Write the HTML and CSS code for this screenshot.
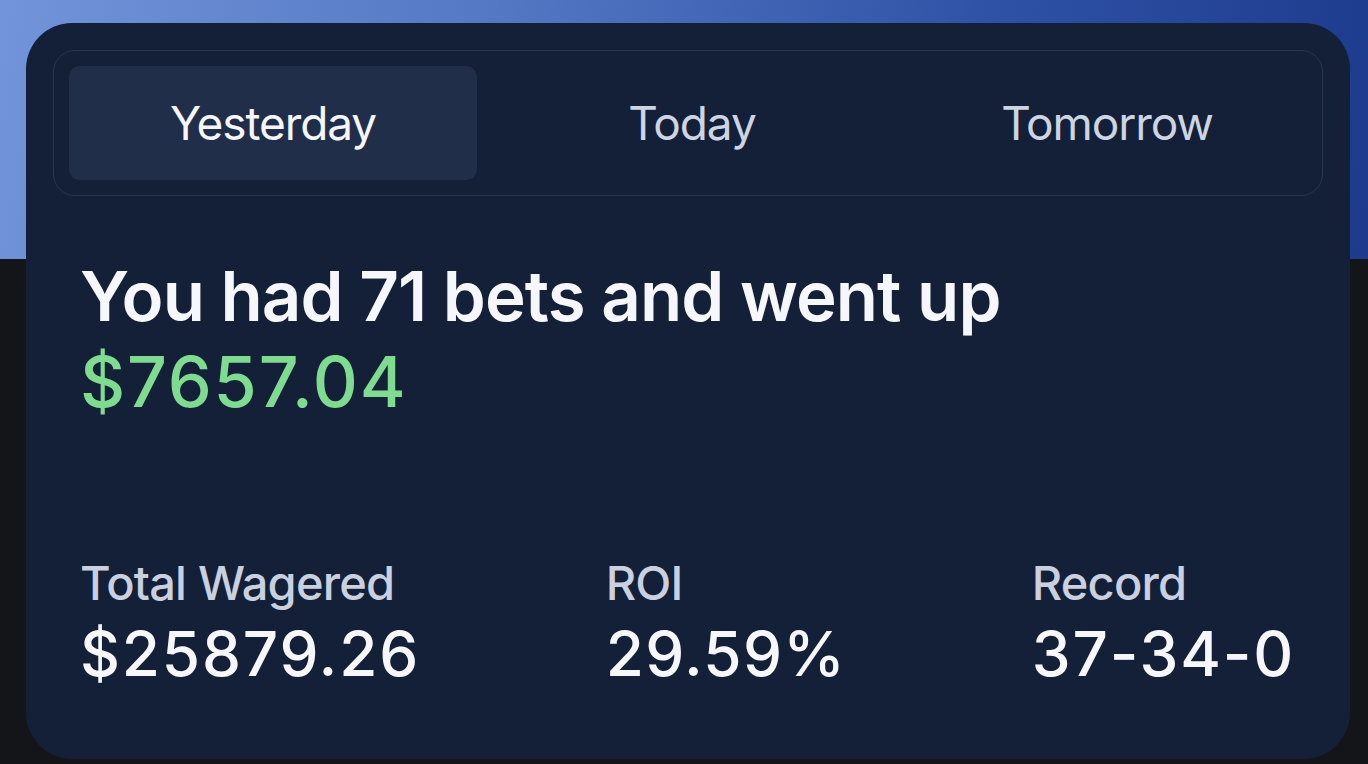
FILE: index.html
```html
<!DOCTYPE html>
<html lang="en">
<head>
<meta charset="utf-8">
<title>Betting summary</title>
<link rel="stylesheet" href="styles.css">
</head>
<body>
<main class="card">
  <nav class="tabs">
    <button class="tab tab-active">Yesterday</button>
    <button class="tab">Today</button>
    <button class="tab">Tomorrow</button>
  </nav>
  <section class="summary">
    <h1 class="headline">You had 71 bets and went up</h1>
    <div class="profit">$7657.04</div>
  </section>
  <section class="stats">
    <div class="stat">
      <div class="stat-label">Total Wagered</div>
      <div class="stat-value">$25879.26</div>
    </div>
    <div class="stat">
      <div class="stat-label">ROI</div>
      <div class="stat-value stat-value-pct">29.59%</div>
    </div>
    <div class="stat">
      <div class="stat-label">Record</div>
      <div class="stat-value">37-34-0</div>
    </div>
  </section>
</main>
</body>
</html>
```
FILE: styles.css
```css
html, body {
  margin: 0;
  padding: 0;
}
body {
  width: 1368px;
  height: 764px;
  overflow: hidden;
  font-family: Inter, "Noto Sans", "Liberation Sans", sans-serif;
  background:
    linear-gradient(100deg, #7294da 0%, #5478c4 35%, #2f52a6 70%, #1d3a8c 100%) top left / 100% 259px no-repeat,
    #131519;
  padding-top: 23px;
  box-sizing: border-box;
}
.card {
  margin-left: 26px;
  width: 1324px;
  height: 736px;
  box-sizing: border-box;
  background: #141f38;
  border-radius: 46px;
  padding: 27px 27px 0 27px;
}
.tabs {
  display: grid;
  grid-template-columns: repeat(3, 1fr);
  gap: 7px;
  border: 1px solid #293652;
  border-radius: 22px;
  padding: 15px 15px 14px 15px;
  height: 146px;
  box-sizing: border-box;
}
.tab {
  border: 0;
  background: transparent;
  font-family: inherit;
  font-size: 46px;
  font-weight: 400;
  color: #cdd4e2;
  border-radius: 11px;
  height: 114px;
  padding: 0;
  letter-spacing: -1.1px;
}
.tab + .tab {
  padding-left: 8px;
}
.tab-active {
  background: #212e4a;
  color: #f4f6fa;
}
.summary {
  padding: 57px 29px 0 27px;
}
.headline {
  margin: 0;
  font-size: 69px;
  line-height: 86px;
  font-weight: 600;
  color: #f6f7fa;
  letter-spacing: -0.9px;
}
.profit {
  font-size: 70px;
  line-height: 86px;
  font-weight: 500;
  color: #7fdb8f;
  letter-spacing: 1.8px;
}
.stats {
  display: flex;
  justify-content: space-between;
  padding: 130px 30px 0 27px;
}
.stat {
  display: flex;
  flex-direction: column;
  gap: 5px;
}
.stat-label {
  font-size: 47px;
  line-height: 56px;
  font-weight: 500;
  color: #c9d0df;
  letter-spacing: -0.8px;
}
.stat-value {
  font-size: 62px;
  line-height: 76px;
  font-weight: 500;
  color: #f6f7fa;
  letter-spacing: 1.8px;
  margin-right: -2px;
}
.stat-value-pct {
  letter-spacing: 1.3px;
}
```
